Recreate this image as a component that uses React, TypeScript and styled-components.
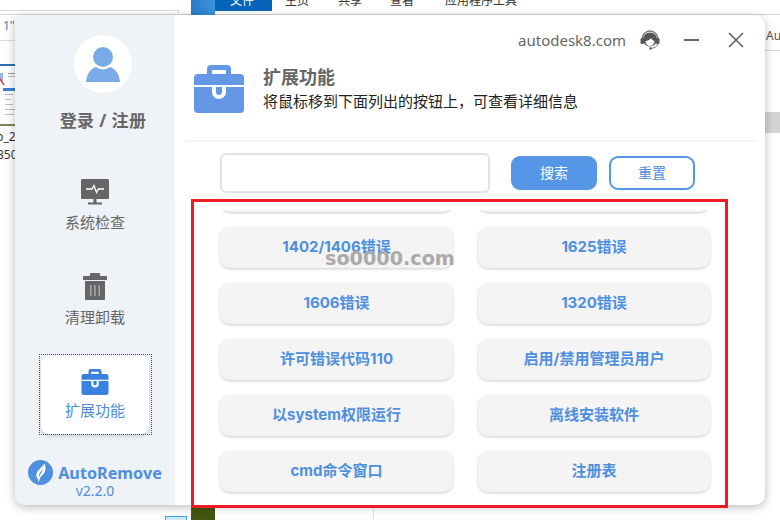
import React from "react";
import styled, { createGlobalStyle } from "styled-components";

const CJK = `"Noto Sans", "Noto Sans CJK SC", sans-serif`;

const GlobalStyle = createGlobalStyle`
  html, body { margin: 0; padding: 0; background: #fff; }
  * { box-sizing: border-box; }
`;

const Desktop = styled.div`
  position: relative;
  width: 780px;
  height: 520px;
  padding: 15px;
  overflow: hidden;
  background: #fff;
  font-family: ${CJK};
`;

/* things from the windows behind the app */
const Behind = styled.div<{ $x: number; $y: number; $w: number; $h: number; $bg?: string }>`
  position: absolute;
  left: ${(p) => p.$x}px;
  top: ${(p) => p.$y}px;
  width: ${(p) => p.$w}px;
  height: ${(p) => p.$h}px;
  background: ${(p) => p.$bg || "transparent"};
`;

const BehindText = styled.span<{ $x: number; $y: number; $c?: string }>`
  position: absolute;
  left: ${(p) => p.$x}px;
  top: ${(p) => p.$y}px;
  font-size: 12px;
  line-height: 16px;
  white-space: nowrap;
  color: ${(p) => p.$c || "#333"};
`;

const Ribbon = styled(Behind)`
  border-bottom: 1px solid #d6d6d6;
`;

const FrameBox = styled(Behind)`
  border: 1px solid #dcdcdc;
`;

const SmallTile = styled(Behind)`
  border: 1px solid #3fa0dc;
  background: #cde8f8;
`;

const ThumbArt = styled.svg`
  position: absolute;
  left: 0;
  top: 64px;
`;

const Window = styled.div`
  position: relative;
  display: flex;
  width: 750px;
  height: 490px;
  border-radius: 10px;
  overflow: hidden;
  background: #fff;
  box-shadow: 0 2px 10px rgba(0, 0, 0, 0.28);
`;

const Sidebar = styled.aside`
  display: flex;
  flex-direction: column;
  align-items: center;
  width: 160px;
  flex: none;
  padding-top: 20px;
  background: #eff2f7;
`;

const Account = styled.div`
  display: flex;
  flex-direction: column;
  align-items: center;
  margin-left: 16px;
`;

const Avatar = styled.div`
  display: flex;
  align-items: center;
  justify-content: center;
  width: 58px;
  height: 58px;
  border-radius: 50%;
  background: #fff;
`;

const LoginText = styled.div`
  margin-top: 14px;
  font-size: 17px;
  line-height: 28px;
  font-weight: 700;
  letter-spacing: 0.4px;
  color: #666;
`;

const NavList = styled.nav`
  display: flex;
  flex-direction: column;
  align-items: center;
  gap: 14px;
  margin-top: 30px;
`;

const NavItem = styled.div<{ $active?: boolean }>`
  position: relative;
  isolation: isolate;
  display: flex;
  flex-direction: column;
  align-items: center;
  justify-content: center;
  gap: ${(p) => (p.$active ? 4 : 6)}px;
  width: 113px;
  height: 81px;
  margin-top: ${(p) => (p.$active ? -1 : 0)}px;
  font-size: 15px;
  line-height: 22px;
  color: ${(p) => (p.$active ? "#4a8ce0" : "#666")};
  ${(p) =>
    p.$active
      ? `
    border: 1px dotted #555;
    &::before {
      content: "";
      position: absolute;
      inset: 1px 2px 0 1px;
      z-index: -1;
      background: #fff;
      border-radius: 8px;
      box-shadow: 0 2px 5px rgba(0,0,0,0.16);
    }
  `
      : ""}
`;

const Brand = styled.div`
  display: flex;
  flex-direction: column;
  align-items: center;
  margin-top: 25px;
`;

const BrandRow = styled.div`
  display: flex;
  align-items: center;
  gap: 5px;
`;

const BrandName = styled.span`
  font-size: 16.2px;
  line-height: 24px;
  font-weight: 700;
  color: #4f8fe0;
`;

const Version = styled.span`
  margin-top: -3px;
  font-size: 14px;
  line-height: 18px;
  color: #4f8fe0;
`;

const Main = styled.main`
  flex: 1;
  min-width: 0;
  display: flex;
  flex-direction: column;
  padding: 0 10px;
`;

const TitleBar = styled.div`
  display: flex;
  align-items: center;
  justify-content: flex-end;
  height: 50px;
  padding-right: 11px;
`;

const Site = styled.span`
  font-size: 15px;
  color: #666;
  margin-right: 14px;
`;

const WinBtn = styled.span<{ $gap: number }>`
  display: flex;
  margin-left: ${(p) => p.$gap}px;
`;

const Header = styled.header`
  display: flex;
  align-items: flex-start;
  gap: 19px;
  height: 77px;
  padding-left: 9px;
  border-bottom: 2px solid #f1f4f8;
`;

const HeaderText = styled.div`
  display: flex;
  flex-direction: column;
  margin-top: -1px;
`;

const HeaderTitle = styled.h2`
  margin: 0;
  font-size: 18px;
  line-height: 26px;
  font-weight: 700;
  color: #666;
`;

const HeaderHint = styled.p`
  margin: 0;
  font-size: 15px;
  line-height: 22px;
  color: #222;
`;

const SearchRow = styled.div`
  display: flex;
  align-items: center;
  height: 40px;
  margin: 11px 0 0 35px;
`;

const SearchInput = styled.input`
  width: 270px;
  height: 40px;
  border: 2px solid #e2e2e2;
  border-radius: 6px;
  background: #fff;
  outline: none;
`;

const ActionBtn = styled.button<{ $primary?: boolean }>`
  width: 86px;
  height: 34px;
  margin-left: ${(p) => (p.$primary ? 21 : 12)}px;
  border: 2px solid #5596e6;
  border-radius: 9px;
  background: ${(p) => (p.$primary ? "#5596e6" : "#fff")};
  color: ${(p) => (p.$primary ? "#fff" : "#4a8ce0")};
  font-family: inherit;
  font-size: 14px;
  padding: 0 0 2px;
`;

const ListViewport = styled.div`
  height: 293px;
  margin-top: 17px;
  overflow: hidden;
`;

const ButtonGrid = styled.div`
  display: grid;
  grid-template-columns: 233px 232px;
  column-gap: 25px;
  row-gap: 15px;
  margin: -39px 0 0 35px;
`;

const ToolButton = styled.div`
  display: flex;
  align-items: center;
  justify-content: center;
  height: 41px;
  padding-bottom: 4px;
  border-radius: 10px;
  background: #f4f4f4;
  box-shadow: 0 1px 3px rgba(0, 0, 0, 0.2);
  color: #4f8fe0;
  font-family: Inter, "Noto Sans CJK SC", sans-serif;
  font-size: 15px;
  font-weight: 700;
`;

const RedFrame = styled.div`
  position: absolute;
  left: 191px;
  top: 199px;
  width: 537px;
  height: 309px;
  border: 3px solid #ed1c24;
  pointer-events: none;
`;

const Watermark = styled.div`
  position: absolute;
  left: 325px;
  top: 247px;
  font-family: "DejaVu Sans", sans-serif;
  font-size: 19.2px;
  line-height: 24px;
  font-weight: 700;
  color: #aaa;
`;

function Briefcase({ w, h, color }: { w: number; h: number; color: string }) {
  return (
    <svg width={w} height={h} viewBox="0 0 50 48">
      <path
        fill={color}
        fillRule="evenodd"
        d="M17 0h16a4 4 0 0 1 4 4v5h9a4 4 0 0 1 4 4v7H0v-7a4 4 0 0 1 4-4h9V4a4 4 0 0 1 4-4zm1 5v4h14V5z"
      />
      <path
        fill={color}
        d="M0 22h18v5a7 7 0 0 0 14 0v-5h18v22a4 4 0 0 1-4 4H4a4 4 0 0 1-4-4z"
      />
      <path fill={color} d="M22 22h6v5a3 3 0 0 1-6 0z" />
    </svg>
  );
}

function Person() {
  return (
    <svg width="36" height="36" viewBox="0 0 36 36">
      <circle cx="18" cy="11" r="10" fill="#7aaae8" />
      <path
        fill="#7aaae8"
        d="M1 36c1-9 4.500-13 10-15 2 1.500 4.500 2.300 7 2.300s5-.8 7-2.300c5.500 2 9 6 10 15z"
      />
    </svg>
  );
}

function Monitor() {
  return (
    <svg width="28" height="26" viewBox="0 0 28 26">
      <rect x="0" y="0" width="28" height="20" rx="1.500" fill="#666" />
      <path fill="#666" d="M12.500 20h3v3.500h-3zM7 23.500h14V25.500H7z" />
      <path fill="none" stroke="#fff" strokeWidth="1.300" d="M5 10h6l2-3.500 2.500 7 2-3.500h5.500" />
    </svg>
  );
}

function Trash() {
  return (
    <svg width="24" height="27" viewBox="0 0 24 27">
      <path fill="#666" d="M8 0h8a1 1 0 0 1 1 1v2h6a1 1 0 0 1 1 1v3H0V4a1 1 0 0 1 1-1h6V1a1 1 0 0 1 1-1z" />
      <path fill="#666" d="M2 8h20v18a1 1 0 0 1-1 1H3a1 1 0 0 1-1-1z" />
      <path fill="#aaa" d="M7 12h1.500v11H7zM11.200 12h1.500v11h-1.500zM15.500 12H17v11h-1.500z" />
    </svg>
  );
}

function Headset() {
  return (
    <svg width="20" height="20" viewBox="0 0 20 20">
      {/* band and ear cups */}
      <path fill="none" stroke="#777" strokeWidth="1.400" d="M2 10C2 4.500 5.500 1 10 1s8 3.500 8 9" />
      <rect x="0.500" y="8" width="3.500" height="6" rx="1.500" fill="#555" />
      <rect x="16" y="8" width="3.500" height="6" rx="1.500" fill="#555" />
      {/* hair and face */}
      <circle cx="10" cy="9.500" r="7" fill="#555" />
      <path fill="#fff" d="M5.500 11c2.500-.2 4.500-1.200 5.500-3 .8 1.600 2 2.600 3.500 3-.3 3-2.200 5-4.500 5s-4.200-2-4.500-5z" />
      {/* mic */}
      <path fill="none" stroke="#777" strokeWidth="1" d="M17.500 14c-.5 2.500-3 4-6 4.300" />
      <circle cx="10.500" cy="18.500" r="1.200" fill="#555" />
    </svg>
  );
}

function Logo() {
  return (
    <svg width="25" height="25" viewBox="0 0 25 25">
      <circle cx="12.500" cy="12.500" r="12.500" fill="#4f8fe0" />
      <path
        fill="#fff"
        d="M16.500 3.500c2 4.500 1 9.500-2.500 12-1.500 1.100-2.500 3-3 6l-1-.1c.2-1 .2-1.700 0-2.400-1.500-1-2-3-1.500-5C9.300 10 13.500 8 16.500 3.500z"
      />
      <path fill="#4f8fe0" d="M14.800 9c-.3 3-2.500 5-4 8.500-.3-3 1.600-6 4-8.500z" />
    </svg>
  );
}

const rows = [
  "", "",
  "1402/1406错误", "1625错误",
  "1606错误", "1320错误",
  "许可错误代码110", "启用/禁用管理员用户",
  "以system权限运行", "离线安装软件",
  "cmd命令窗口", "注册表",
];

export default function App() {
  return (
    <Desktop>
      <GlobalStyle />

      <Ribbon $x={0} $y={0} $w={780} $h={15} />
      <FrameBox $x={-2} $y={10} $w={181} $h={31} />
      <Behind $x={191} $y={0} $w={24} $h={15} $bg="linear-gradient(90deg,#2a7cc7,#3a94dc)" />
      <Behind $x={215} $y={0} $w={57} $h={11} $bg="#0563b8" />
      <BehindText $x={230} $y={-7} $c="#fff">文件</BehindText>
      <BehindText $x={285} $y={-7}>主页</BehindText>
      <BehindText $x={338} $y={-7}>共享</BehindText>
      <BehindText $x={390} $y={-7}>查看</BehindText>
      <BehindText $x={445} $y={-7}>应用程序工具</BehindText>
      <BehindText $x={3} $y={18} $c="#4a7fb5">1"</BehindText>
      <ThumbArt width="16" height="62" viewBox="0 0 16 62">
        <rect width="16" height="62" fill="#fff" />
        <rect width="16" height="2" fill="#2c6fb5" />
        <rect x="0" y="9" width="3" height="8" fill="#8db8e8" />
        <rect x="8" y="9" width="7" height="1" fill="#999" />
        <rect x="8" y="12" width="7" height="1" fill="#bbb" />
        <path d="M0 15l4 6" stroke="#d9454a" strokeWidth="1.500" />
        <rect x="3" y="24" width="13" height="3" fill="#3f7fcf" />
        <rect x="5" y="30" width="8" height="1" fill="#bbb" />
        <rect x="5" y="35" width="6" height="1" fill="#bbb" />
        <rect x="5" y="40" width="8" height="1" fill="#bbb" />
        <rect x="5" y="45" width="10" height="1" fill="#bbb" />
        <rect x="5" y="50" width="9" height="1" fill="#bbb" />
        <rect y="60" width="16" height="2" fill="#7a8a55" />
      </ThumbArt>
      <BehindText $x={-4} $y={129}>p_2</BehindText>
      <BehindText $x={-3} $y={147}>350</BehindText>
      <BehindText $x={766} $y={28} $c="#555">Au</BehindText>
      <Behind $x={765} $y={50} $w={15} $h={1} $bg="#d9d9d9" />
      <Behind $x={765} $y={112} $w={15} $h={21} $bg="#d4d4d4" />
      <Behind $x={191} $y={505} $w={24} $h={15} $bg="#44560f" />
      <Behind $x={373} $y={505} $w={1} $h={15} $bg="#e2e2e2" />
      <SmallTile $x={165} $y={516} $w={22} $h={8} />

      <Window>
        <Sidebar>
          <Account>
            <Avatar>
              <Person />
            </Avatar>
            <LoginText>登录 / 注册</LoginText>
          </Account>
          <NavList>
            <NavItem>
              <Monitor />
              系统检查
            </NavItem>
            <NavItem>
              <Trash />
              清理卸载
            </NavItem>
            <NavItem $active>
              <Briefcase w={28} h={26} color="#3a82e0" />
              扩展功能
            </NavItem>
          </NavList>
          <Brand>
            <BrandRow>
              <Logo />
              <BrandName>AutoRemove</BrandName>
            </BrandRow>
            <Version>v2.2.0</Version>
          </Brand>
        </Sidebar>

        <Main>
          <TitleBar>
            <Site>autodesk8.com</Site>
            <Headset />
            <WinBtn $gap={24}>
              <svg width="15" height="16" viewBox="0 0 15 16">
                <path d="M0 8h15" stroke="#666" strokeWidth="2" />
              </svg>
            </WinBtn>
            <WinBtn $gap={29}>
              <svg width="16" height="16" viewBox="0 0 16 16">
                <path d="M1 1l14 14M15 1L1 15" stroke="#666" strokeWidth="1.700" />
              </svg>
            </WinBtn>
          </TitleBar>

          <Header>
            <Briefcase w={50} h={48} color="#6497e6" />
            <HeaderText>
              <HeaderTitle>扩展功能</HeaderTitle>
              <HeaderHint>将鼠标移到下面列出的按钮上，可查看详细信息</HeaderHint>
            </HeaderText>
          </Header>

          <SearchRow>
            <SearchInput />
            <ActionBtn $primary>搜索</ActionBtn>
            <ActionBtn>重置</ActionBtn>
          </SearchRow>

          <ListViewport>
            <ButtonGrid>
              {rows.map((label, i) => (
                <ToolButton key={i}>{label}</ToolButton>
              ))}
            </ButtonGrid>
          </ListViewport>
        </Main>
      </Window>

      <RedFrame />
      <Watermark>so0000.com</Watermark>
    </Desktop>
  );
}
